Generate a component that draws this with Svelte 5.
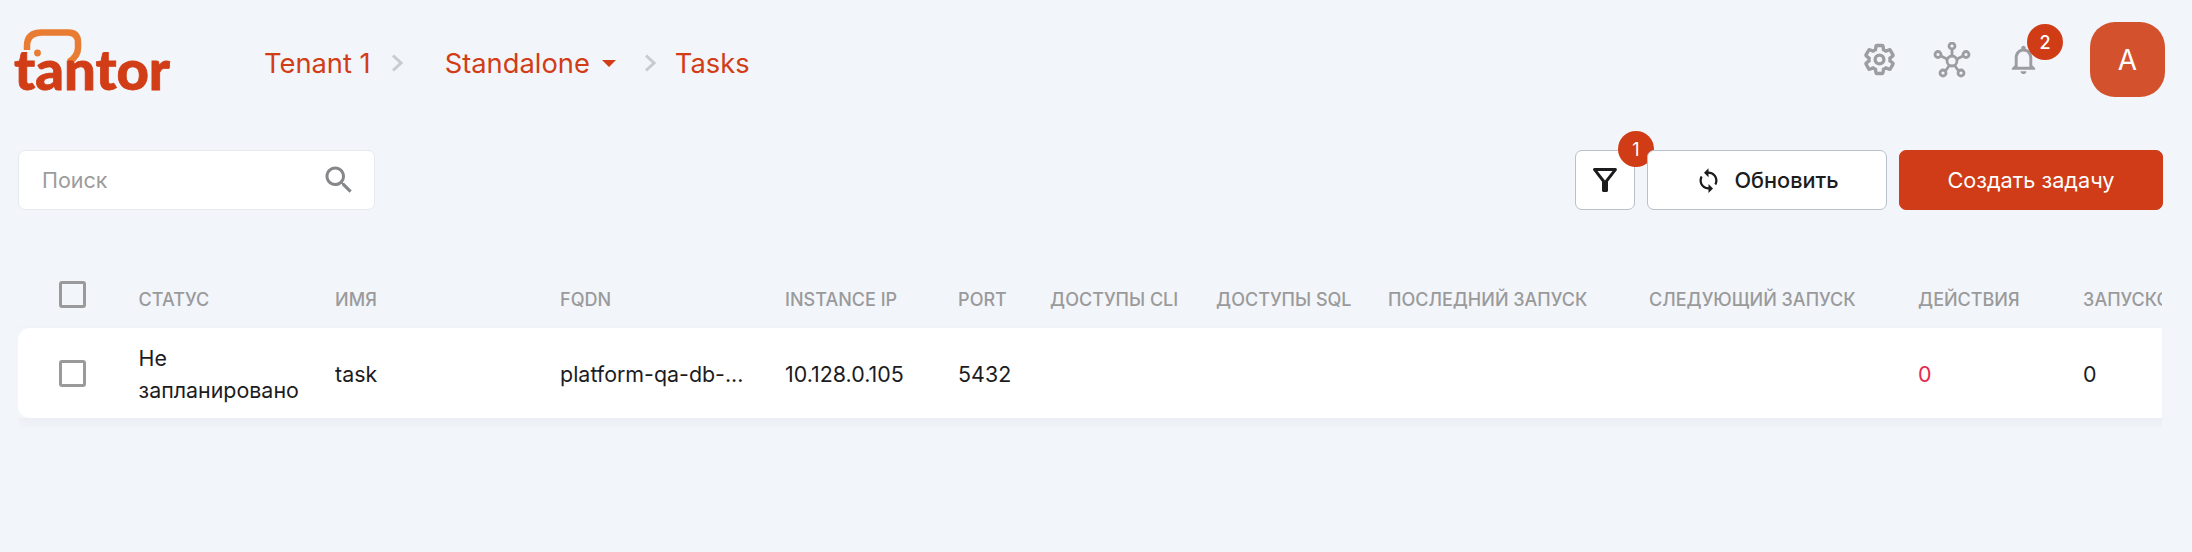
<script lang="ts">
  const headers = [
    "", "Статус", "Имя", "FQDN", "Instance IP", "Port", "Доступы CLI",
    "Доступы SQL", "Последний запуск", "Следующий запуск", "Действия", "Запусков"
  ];
  const widths = [120.6, 196.5, 225, 225, 173, 92, 166, 172, 261, 269, 165, 200];
</script>

<div class="page">
  <header class="topbar">
    <svg class="logo" width="160" height="64" viewBox="0 0 160 64" aria-label="tantor">
      <path class="bubble" d="M13 22V18Q13 4.5 28 4.5H54Q64 4.5 64 14.5V20Q64 28 55 34" />
      <text class="wordmark" x="0" y="62" textLength="156" lengthAdjust="spacingAndGlyphs">tantor</text>
      <circle class="dot" cx="23.5" cy="25" r="3.4" />
    </svg>

    <nav class="crumbs">
      <span>Tenant 1</span>
      <svg class="chev" viewBox="0 0 12 18" width="12" height="18"><path d="M2 1.5 10 9l-8 7.5" /></svg>
      <span class="drop">Standalone</span>
      <svg class="caret" viewBox="0 0 14 7" width="14" height="7"><path d="M0 0h14L7 7z" /></svg>
      <svg class="chev second" viewBox="0 0 12 18" width="12" height="18"><path d="M2 1.5 10 9l-8 7.5" /></svg>
      <span>Tasks</span>
    </nav>

    <div class="icons">
      <svg class="gear" viewBox="0 0 24 24" width="35" height="35">
        <path d="M19.14 12.94c.04-.3.06-.61.06-.94 0-.32-.02-.64-.07-.94l2.03-1.58c.18-.14.23-.41.12-.61l-1.92-3.32c-.12-.22-.37-.29-.59-.22l-2.39.96c-.5-.38-1.03-.7-1.62-.94l-.36-2.54c-.04-.24-.24-.41-.48-.41h-3.84c-.24 0-.43.17-.47.41l-.36 2.54c-.59.24-1.13.57-1.62.94l-2.39-.96c-.22-.08-.47 0-.59.22L2.74 8.87c-.12.21-.08.47.12.61l2.03 1.58c-.05.3-.09.63-.09.94s.02.64.07.94l-2.03 1.58c-.18.14-.23.41-.12.61l1.92 3.32c.12.22.37.29.59.22l2.39-.96c.5.38 1.03.7 1.62.94l.36 2.54c.05.24.24.41.48.41h3.84c.24 0 .44-.17.47-.41l.36-2.54c.59-.24 1.13-.56 1.62-.94l2.39.96c.22.08.47 0 .59-.22l1.92-3.32c.12-.22.07-.47-.12-.61l-2.01-1.58z" />
        <circle cx="12" cy="12" r="3" />
      </svg>
      <svg class="net" viewBox="0 0 38 36" width="38" height="36">
        <path d="M19 14V7M24 17l7-3.5M22 24l4 5.5M16 24l-4 5.5M14 17 7 13.5" />
        <circle cx="19" cy="19" r="5" />
        <circle cx="19" cy="4" r="3" />
        <circle cx="33" cy="12.5" r="3" />
        <circle cx="28" cy="31" r="3" />
        <circle cx="10" cy="31" r="3" />
        <circle cx="5" cy="12.5" r="3" />
      </svg>
      <div class="bell">
        <svg viewBox="0 0 24 24" width="35" height="35">
          <path d="M12 22c1.1 0 2-.9 2-2h-4c0 1.1.9 2 2 2zm6-6v-5c0-3.07-1.64-5.64-4.5-6.32V4c0-.83-.67-1.5-1.5-1.5s-1.5.67-1.5 1.5v.68C7.63 5.36 6 7.92 6 11v5l-2 2v1h16v-1l-2-2zm-2 1H8v-6c0-2.48 1.51-4.5 4-4.5s4 2.02 4 4.5v6z" />
        </svg>
        <span class="badge">2</span>
      </div>
      <div class="avatar">A</div>
    </div>
  </header>

  <section class="toolbar">
    <div class="search">
      <span class="placeholder">Поиск</span>
      <svg viewBox="0 0 24 24" width="36" height="36">
        <path d="M15.5 14h-.79l-.28-.27C15.41 12.59 16 11.11 16 9.5 16 5.91 13.09 3 9.5 3S3 5.91 3 9.5 5.91 16 9.5 16c1.61 0 3.09-.59 4.23-1.57l.27.28v.79l5 4.99L20.49 19l-4.99-5zm-6 0C7.01 14 5 11.99 5 9.5S7.01 5 9.5 5 14 7.01 14 9.5 11.99 14 9.5 14z" />
      </svg>
    </div>
    <div class="actions">
      <button class="btn filter" type="button">
        <svg viewBox="0 0 24 24" width="36" height="36">
          <path d="M7 6h10l-5.01 6.3L7 6zm-2.75-.39C6.27 8.2 10 13 10 13v6c0 .55.45 1 1 1h2c.55 0 1-.45 1-1v-6s3.72-4.8 5.74-7.39c.51-.66.04-1.61-.79-1.61H5.04c-.83 0-1.3.95-.79 1.61z" />
        </svg>
        <span class="badge">1</span>
      </button>
      <button class="btn refresh" type="button">
        <svg viewBox="0 0 24 24" width="27" height="27">
          <path d="M12 4V1L8 5l4 4V6c3.31 0 6 2.69 6 6 0 1.01-.25 1.97-.7 2.8l1.46 1.46C19.54 15.03 20 13.57 20 12c0-4.42-3.58-8-8-8zm0 14c-3.31 0-6-2.69-6-6 0-1.01.25-1.97.7-2.8L5.24 7.74C4.46 8.97 4 10.43 4 12c0 4.42 3.58 8 8 8v3l4-4-4-4v3z" />
        </svg>
        Обновить
      </button>
      <button class="btn primary" type="button">Создать задачу</button>
    </div>
  </section>

  <div class="table-wrap">
    <table>
      <colgroup>
        {#each widths as w}
          <col style="width: {w}px" />
        {/each}
      </colgroup>
      <thead>
        <tr>
          {#each headers as h, i}
            <th>
              {#if i === 0}<span class="check"></span>{:else}{h}{/if}
            </th>
          {/each}
        </tr>
      </thead>
      <tbody>
        <tr>
          <td><span class="check"></span></td>
          <td>Не<br />запланировано</td>
          <td>task</td>
          <td>platform-qa-db-...</td>
          <td>10.128.0.105</td>
          <td>5432</td>
          <td></td>
          <td></td>
          <td></td>
          <td></td>
          <td class="danger">0</td>
          <td>0</td>
        </tr>
      </tbody>
    </table>
  </div>
</div>

<style>
  :global(body) {
    margin: 0;
    background: #f2f5fa;
    font-family: Inter, "Liberation Sans", sans-serif;
    color: #1c1c1e;
  }

  .page {
    width: 2192px;
    height: 552px;
    overflow: hidden;
  }

  .topbar {
    display: flex;
    align-items: center;
    height: 75px;
    padding: 22px 27px 0 14px;
  }

  .logo {
    flex: none;
    overflow: visible;
  }
  .bubble {
    fill: none;
    stroke: #e97c33;
    stroke-width: 6.5;
  }
  .dot {
    fill: #e97c33;
  }
  .wordmark {
    font-family: Lato, sans-serif;
    font-weight: 900;
    font-size: 56px;
    fill: #d13d16;
    stroke: #d13d16;
    stroke-width: 0.8px;
  }

  .crumbs {
    display: flex;
    align-items: center;
    margin: 7px 0 0 90px;
    font-size: 27.3px;
    color: #d13d16;
  }
  .chev {
    margin: 0 42px 0 20px;
    fill: none;
    stroke: #c8cbd0;
    stroke-width: 3;
  }
  .chev.second {
    margin: 0 19px 0 28px;
  }
  .caret {
    margin-left: 12px;
    fill: #d13d16;
  }

  .icons {
    display: flex;
    align-items: center;
    margin-left: auto;
  }
  .icons svg {
    display: block;
    fill: #9b9da1;
  }
  .gear {
    fill: none !important;
    stroke: #9b9da1;
    stroke-width: 2.3;
    margin-right: 36px;
  }
  .net {
    fill: none !important;
    stroke: #9b9da1;
    stroke-width: 2.8;
    margin-right: 35px;
  }
  .bell {
    position: relative;
    margin-right: 49px;
  }
  .bell .badge {
    top: -18px;
    left: 21px;
  }
  .avatar {
    width: 75px;
    height: 75px;
    border-radius: 25px;
    background: #d4512e;
    color: #fff;
    font-size: 28px;
    display: flex;
    align-items: center;
    justify-content: center;
  }

  .badge {
    position: absolute;
    width: 36px;
    height: 36px;
    border-radius: 50%;
    background: #d03c15;
    color: #fff;
    font-size: 18px;
    font-weight: 500;
    display: flex;
    align-items: center;
    justify-content: center;
  }

  .toolbar {
    display: flex;
    justify-content: space-between;
    align-items: center;
    height: 60px;
    margin-top: 53px;
    padding: 0 29px 0 18px;
  }
  .search {
    box-sizing: border-box;
    width: 357px;
    height: 60px;
    display: flex;
    align-items: center;
    justify-content: space-between;
    padding: 0 17px 0 23px;
    background: #fff;
    border: 1.4px solid #e6e9ee;
    border-radius: 7px;
  }
  .placeholder {
    font-size: 21.5px;
    color: #9c9c9c;
  }
  .search svg {
    fill: #85878a;
  }

  .actions {
    display: flex;
    gap: 12px;
  }
  .btn {
    box-sizing: border-box;
    height: 60px;
    display: flex;
    align-items: center;
    justify-content: center;
    gap: 12px;
    position: relative;
    background: #fff;
    border: 1.4px solid #b9bfcb;
    border-radius: 7px;
    font-family: inherit;
    font-size: 21.7px;
    font-weight: 450;
    color: #1c1c1e;
    padding: 0;
  }
  .btn svg {
    fill: #1c1c1e;
  }
  .filter {
    width: 60px;
  }
  .filter .badge {
    top: -20px;
    left: 42px;
    font-weight: 400;
  }
  .refresh {
    width: 240px;
  }
  .primary {
    width: 264px;
    background: #cf3c17;
    border-color: #cf3c17;
    color: #fff;
    font-weight: 400;
  }

  .table-wrap {
    margin: 58px 30px 0 18px;
    overflow: hidden;
    padding-bottom: 12px;
  }
  table {
    border-collapse: separate;
    border-spacing: 0;
    table-layout: fixed;
    width: 2144px;
    min-width: 2144px;
  }
  th,
  td {
    padding: 0;
    text-align: left;
    white-space: nowrap;
    overflow: hidden;
  }
  th {
    box-sizing: border-box;
    height: 60px;
    padding-top: 2px;
    font-size: 18px;
    font-weight: 500;
    color: #9a9a9a;
    text-transform: uppercase;
  }
  th:first-child,
  td:first-child {
    padding-left: 41px;
  }
  tbody tr {
    box-shadow: 0 4px 10px rgba(60, 70, 100, 0.05);
  }
  td {
    box-sizing: border-box;
    height: 90px;
    padding-top: 1px;
    background: #fff;
    font-size: 21.4px;
    line-height: 32px;
  }
  td:first-child {
    border-radius: 12px 0 0 12px;
  }
  .danger {
    color: #e8294f;
  }
  .check {
    display: block;
    box-sizing: border-box;
    width: 27px;
    height: 27px;
    border: 3px solid #9a9a9a;
    border-radius: 3px;
  }
  th .check {
    margin-top: -9px;
  }
</style>
